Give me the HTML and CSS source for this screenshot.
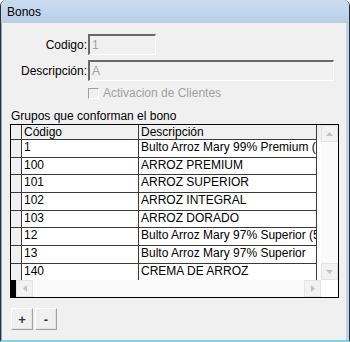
FILE: index.html
```html
<!DOCTYPE html>
<html lang="es">
<head>
    <meta charset="UTF-8">
    <title>Bonos</title>
    <link rel="stylesheet" href="styles.css">
</head>
<body>
    <div class="window">
        <div class="titleBar">Bonos</div>
        <div class="content">
            <div class="fieldRow">
                <span class="fieldLabel">Codigo:</span>
                <div class="textBox codeBox">1</div>
            </div>
            <div class="fieldRow">
                <span class="fieldLabel">Descripción:</span>
                <div class="textBox descBox">A</div>
            </div>
            <div class="checkRow">
                <span class="checkBox"></span>
                <span>Activacion de Clientes</span>
            </div>
            <div class="groupTitle">Grupos que conforman el bono</div>

            <div class="dataGrid">
                <div class="gridRows">
                    <div class="gridRow headRow">
                        <div class="cell ind"></div>
                        <div class="cell">Código</div>
                        <div class="cell">Descripción</div>
                    </div>
                    <div class="gridRow">
                        <div class="cell ind"></div>
                        <div class="cell">1</div>
                        <div class="cell">Bulto Arroz Mary 99% Premium (</div>
                    </div>
                    <div class="gridRow">
                        <div class="cell ind"></div>
                        <div class="cell">100</div>
                        <div class="cell">ARROZ PREMIUM</div>
                    </div>
                    <div class="gridRow">
                        <div class="cell ind"></div>
                        <div class="cell">101</div>
                        <div class="cell">ARROZ SUPERIOR</div>
                    </div>
                    <div class="gridRow">
                        <div class="cell ind"></div>
                        <div class="cell">102</div>
                        <div class="cell">ARROZ INTEGRAL</div>
                    </div>
                    <div class="gridRow">
                        <div class="cell ind"></div>
                        <div class="cell">103</div>
                        <div class="cell">ARROZ DORADO</div>
                    </div>
                    <div class="gridRow">
                        <div class="cell ind"></div>
                        <div class="cell">12</div>
                        <div class="cell">Bulto Arroz Mary 97% Superior (5</div>
                    </div>
                    <div class="gridRow">
                        <div class="cell ind"></div>
                        <div class="cell">13</div>
                        <div class="cell">Bulto Arroz Mary 97% Superior</div>
                    </div>
                    <div class="gridRow">
                        <div class="cell ind"></div>
                        <div class="cell">140</div>
                        <div class="cell">CREMA DE ARROZ</div>
                    </div>
                </div>

                <div class="vScroll">
                    <div class="scrollBtn">
                        <svg width="7" height="4" viewBox="0 0 7 4"><path d="M0 4 L3.5 0 L7 4 Z" fill="#c2c2c2"/></svg>
                    </div>
                    <div class="scrollBtn">
                        <svg width="7" height="4" viewBox="0 0 7 4"><path d="M0 0 L3.5 4 L7 0 Z" fill="#c2c2c2"/></svg>
                    </div>
                </div>

                <div class="hScroll">
                    <div class="frozenPart"></div>
                    <div class="scrollBtn">
                        <svg width="4" height="7" viewBox="0 0 4 7"><path d="M4 0 L0 3.5 L4 7 Z" fill="#c2c2c2"/></svg>
                    </div>
                    <div class="scrollTrack"></div>
                    <div class="scrollBtn">
                        <svg width="4" height="7" viewBox="0 0 4 7"><path d="M0 0 L4 3.5 L0 7 Z" fill="#c2c2c2"/></svg>
                    </div>
                </div>
                <div class="corner"></div>
            </div>

            <div class="btnRow">
                <button class="smallBtn">+</button>
                <button class="smallBtn">-</button>
            </div>
        </div>
    </div>
</body>
</html>
```
FILE: styles.css
```css
body {
    margin: 0;
    font-family: "Liberation Sans", Arial, sans-serif;
    font-size: 12px;
    color: #000;
}

.window {
    width: 350px;
    height: 342px;
    box-sizing: border-box;
    border-left: 1px solid #2f2f2f;
    border-right: 1px solid #2f2f2f;
    border-bottom: 2px solid #86cfe5;
    border-radius: 6px 6px 0 0;
    background: #bdd4ec;
    display: flex;
    flex-direction: column;
    overflow: hidden;
}

.titleBar {
    height: 23px;
    line-height: 24px;
    padding-left: 6px;
    background: linear-gradient(#cbdcef, #b8cfe8);
}

.content {
    flex: 1;
    margin-right: 3px;
    border-left: 1px solid #8ea6bf;
    background: #f0f0f0;
    padding: 11px 0 0 8px;
}

.fieldRow {
    display: flex;
    align-items: center;
    height: 21px;
    margin-bottom: 5px;
}

.fieldLabel {
    width: 77px;
    text-align: right;
    margin-right: 1px;
}

.textBox {
    height: 21px;
    box-sizing: border-box;
    border-top: 2px solid #696969;
    border-left: 2px solid #696969;
    border-bottom: 1px solid #fff;
    border-right: 1px solid #fff;
    color: #a3a3a3;
    line-height: 18px;
    padding-left: 2px;
}

.codeBox {
    width: 68px;
}

.descBox {
    width: 246px;
}

.checkRow {
    display: flex;
    align-items: center;
    margin: 3px 0 0 78px;
    height: 14px;
    color: #a0a0a0;
}

.checkBox {
    width: 11px;
    height: 11px;
    box-sizing: border-box;
    border-top: 1px solid #a0a0a0;
    border-left: 1px solid #a0a0a0;
    border-bottom: 1px solid #fff;
    border-right: 1px solid #fff;
    margin-right: 4px;
}

.groupTitle {
    margin: 9px 0 1px 1px;
    line-height: 14px;
}

.dataGrid {
    width: 329px;
    box-sizing: border-box;
    border: 1px solid #000;
    display: grid;
    grid-template-columns: 310px 17px;
    grid-template-rows: 155px 17px;
    background: #fff;
}

.gridRows {
    overflow: hidden;
}

.gridRow {
    display: grid;
    grid-template-columns: 11px 117px 178px;
    height: 17.7px;
}

.headRow {
    height: 15px;
    background: #f0f0f0;
}

.cell {
    box-sizing: border-box;
    border-right: 1px solid #3a3a3a;
    border-bottom: 1px solid #3a3a3a;
    padding-left: 2px;
    line-height: 14px;
    white-space: nowrap;
    overflow: hidden;
}

.cell.ind {
    background: #f0f0f0;
    padding: 0;
}

.vScroll {
    background: #fafafa;
    display: flex;
    flex-direction: column;
    justify-content: space-between;
}

.scrollBtn {
    width: 17px;
    height: 17px;
    box-sizing: border-box;
    border: 1px solid #e3e3e3;
    background: #f2f2f2;
    display: flex;
    align-items: center;
    justify-content: center;
}

.hScroll {
    display: flex;
    background: #fafafa;
}

.frozenPart {
    width: 5px;
    background: #000;
}

.scrollTrack {
    flex: 1;
}

.corner {
    background: #fff;
}

.btnRow {
    display: flex;
    gap: 2px;
    margin: 10px 0 0 1px;
}

.smallBtn {
    width: 22px;
    height: 22px;
    padding: 0;
    font-family: "Liberation Sans", Arial, sans-serif;
    font-size: 13px;
    font-weight: bold;
    color: #333;
    background: #f0f0f0;
    border: 1px solid;
    border-color: #fff #a0a0a0 #a0a0a0 #fff;
    box-shadow: inset -1px -1px 0 #e3e3e3;
}
```
